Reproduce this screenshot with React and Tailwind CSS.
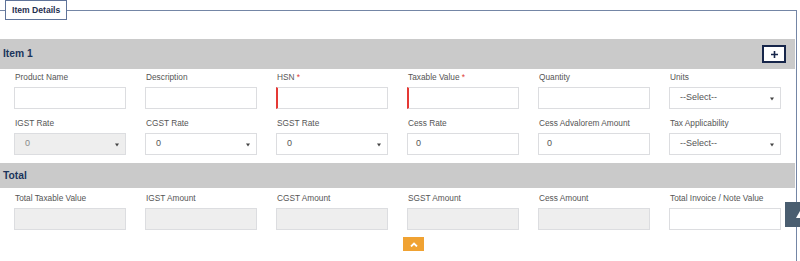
import React from 'react'

const font = { fontFamily: '"Liberation Sans", Arial, sans-serif' }

function Caret() {
  return (
    <svg className="absolute right-[6px] top-[9px]" width="4" height="4" viewBox="0 0 4 4">
      <path d="M0 0.5h4L2 3.5z" fill="#444" />
    </svg>
  )
}

function Field({ label, required, kind = 'input', value = '', disabled, redEdge }) {
  return (
    <div className="flex flex-col">
      <div className="h-[14px] text-[8.3px] leading-[14px] text-[#555] pl-[1px] whitespace-nowrap">
        {label}
        {required && <span className="text-[#e0403a]"> *</span>}
      </div>
      <div
        className={`relative mt-[3px] h-[22px] border border-[#dcdde0] flex items-center text-[9px] ${
          disabled ? 'bg-[#eeeeee] text-[#888]' : 'bg-white text-[#555]'
        } ${redEdge ? 'border-l-2 border-l-[#e53935]' : ''} ${kind === 'select' ? 'pl-[10px]' : 'pl-[8px]'}`}
      >
        {value}
        {kind === 'select' && <Caret />}
      </div>
    </div>
  )
}

const row1 = [
  { label: 'Product Name' },
  { label: 'Description' },
  { label: 'HSN', required: true, redEdge: true },
  { label: 'Taxable Value', required: true, redEdge: true },
  { label: 'Quantity' },
  { label: 'Units', kind: 'select', value: '--Select--' },
]

const row2 = [
  { label: 'IGST Rate', kind: 'select', value: '0', disabled: true },
  { label: 'CGST Rate', kind: 'select', value: '0' },
  { label: 'SGST Rate', kind: 'select', value: '0' },
  { label: 'Cess Rate', value: '0' },
  { label: 'Cess Advalorem Amount', value: '0' },
  { label: 'Tax Applicability', kind: 'select', value: '--Select--' },
]

const totals = [
  { label: 'Total Taxable Value', disabled: true },
  { label: 'IGST Amount', disabled: true },
  { label: 'CGST Amount', disabled: true },
  { label: 'SGST Amount', disabled: true },
  { label: 'Cess Amount', disabled: true },
  { label: 'Total Invoice / Note Value' },
]

export default function App() {
  return (
    <div className="relative w-[800px] h-[261px] overflow-hidden bg-white" style={font}>
      <fieldset className="w-[797px] border-t border-r border-[#7486a6] min-h-[261px]">
        <legend className="ml-[5px] h-[20px] px-[6px] border border-[#5f7399] bg-white text-[8.6px] font-bold text-[#1f3050] leading-[18px]">
          Item Details
        </legend>

        {/* Item 1 header */}
        <div className="mt-[19px] h-[30px] bg-[#cacaca] flex items-center justify-between pl-[3px] pr-[9px] mr-[1px]">
          <span className="text-[10.3px] font-bold text-[#1b355c]">Item 1</span>
          <button className="w-[24px] h-[18px] border-2 border-[#17264a] bg-white flex items-center justify-center">
            <svg width="7" height="7" viewBox="0 0 7 7">
              <path d="M3.5 0v7M0 3.5h7" stroke="#17264a" strokeWidth="1.6" />
            </svg>
          </button>
        </div>

        <div className="grid grid-cols-[repeat(6,112px)] gap-x-[19px] gap-y-[7px] pl-[14px] pt-[1px]">
          {row1.map((f) => (
            <Field key={f.label} {...f} />
          ))}
          {row2.map((f) => (
            <Field key={f.label} {...f} />
          ))}
        </div>

        {/* Total header */}
        <div className="mt-[8px] h-[25px] bg-[#cacaca] flex items-center pl-[3px] mr-[1px]">
          <span className="text-[10.3px] font-bold text-[#1b355c]">Total</span>
        </div>

        <div className="grid grid-cols-[repeat(6,112px)] gap-x-[19px] pl-[14px] pt-[3px]">
          {totals.map((f) => (
            <Field key={f.label} {...f} />
          ))}
        </div>
      </fieldset>

      {/* scroll tabs */}
      <div className="absolute left-[403px] top-[237px] w-[21px] h-[14px] bg-[#f0a232] flex items-end justify-center pb-[4px]">
        <svg width="8" height="5" viewBox="0 0 8 5">
          <path d="M1 4.5L4 1.5L7 4.5" stroke="#fff" strokeWidth="1.8" fill="none" />
        </svg>
      </div>
      <div className="absolute left-[785px] top-[202px] w-[30px] h-[25px] bg-[#4a5e70] flex items-center justify-center">
        <svg width="8" height="7" viewBox="0 0 8 7">
          <path d="M0 7L4 0L8 7z" fill="#fff" />
        </svg>
      </div>
    </div>
  )
}
